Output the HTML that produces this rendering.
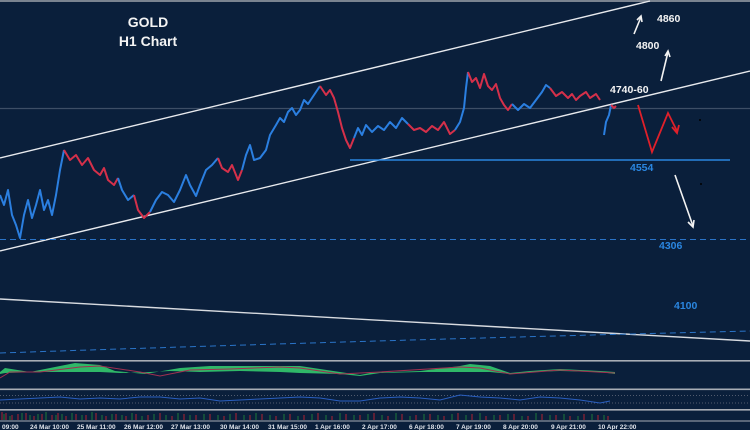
<!DOCTYPE html>
<html><head><meta charset="utf-8"><style>
html,body{margin:0;padding:0;background:#0a1f3b;}
svg{display:block}
text{font-family:"Liberation Sans",Arial,sans-serif;font-weight:bold}
</style></head><body>
<svg width="750" height="430" viewBox="0 0 750 430" xmlns="http://www.w3.org/2000/svg">
<rect width="750" height="430" fill="#0a1f3b"/>
<rect x="0" y="0" width="750" height="2" fill="#7a8390"/>
<line x1="0" y1="108.5" x2="750" y2="108.5" stroke="#3d4e66" stroke-width="1.2"/>
<line x1="0" y1="158" x2="650" y2="1" stroke="#e8eaee" stroke-width="1.4"/>
<line x1="0" y1="251" x2="750" y2="71" stroke="#e8eaee" stroke-width="1.4"/>
<line x1="0" y1="299" x2="750" y2="341" stroke="#d8dbe0" stroke-width="1.4"/>
<line x1="350" y1="160" x2="730" y2="160" stroke="#2a86e0" stroke-width="1.4"/>
<line x1="0" y1="239.5" x2="750" y2="239.5" stroke="#2a74c8" stroke-width="1" stroke-dasharray="6,4"/>
<path d="M0 353 Q 380 340 750 331" fill="none" stroke="#2a74c8" stroke-width="1" stroke-dasharray="6,4"/>
<g fill="none" stroke-width="2" stroke-linejoin="round">
<polyline stroke="#2b7fe0" points="0,195 4,205 8,190 12,215 16,225 20,238 24,215 28,200 32,218 36,205 40,190 44,210 48,200 52,215 56,195 60,170 64,150"/>
<polyline stroke="#d5304a" points="64,150 70,160 76,155 82,165 88,158 94,170 100,175 104,168 108,180 114,185 118,178"/>
<polyline stroke="#2b7fe0" points="118,178 122,190 128,200 134,195"/>
<polyline stroke="#d5304a" points="134,195 138,210 144,218 150,212"/>
<polyline stroke="#2b7fe0" points="150,212 156,200 162,192 168,195 174,202 180,190 186,175 190,185 196,196 200,185 206,170 212,165 218,158"/>
<polyline stroke="#d5304a" points="218,158 222,168 228,172 232,165 238,180 242,170"/>
<polyline stroke="#2b7fe0" points="242,170 246,155 250,145 254,160 260,158 266,150 270,135 276,125 280,118 284,122 288,112 292,108 296,115 300,110 304,100 308,104 312,98 316,92 320,86"/>
<polyline stroke="#d5304a" points="320,86 326,95 330,90 334,98 338,112 342,128 346,140 350,148 354,138"/>
<polyline stroke="#2b7fe0" points="354,138 358,128 362,135 366,125 372,132 378,126 384,130 390,122 396,128 402,118 408,124"/>
<polyline stroke="#d5304a" points="408,124 414,130 420,128 426,132 432,126 438,130 444,122 450,134 455,130"/>
<polyline stroke="#2b7fe0" points="455,130 460,122 464,108 466,88 468,72"/>
<polyline stroke="#d5304a" points="468,72 472,82 476,78 480,88 484,74 488,86 492,90 496,84 500,98 504,105 508,110 512,104"/>
<polyline stroke="#2b7fe0" points="512,104 518,110 524,104 530,108 536,100 542,92 546,85 550,88"/>
<polyline stroke="#d5304a" points="550,88 556,96 562,92 568,98 572,94 576,100 580,96 586,92 590,98 596,94 600,100"/>
<polyline stroke="#2b7fe0" points="604,135 606,122 609,115 611,105"/>
<polyline stroke="#d5304a" points="611,105 614,108 616,106"/>
</g>
<polyline points="638,105 652,152 668,113 677,131" fill="none" stroke="#e0202a" stroke-width="1.8"/>
<polyline points="672,127 677,133 679,125" fill="none" stroke="#e0202a" stroke-width="1.8"/>
<g stroke="#f2f2f2" stroke-width="1.6" fill="none">
<line x1="634" y1="34" x2="641" y2="17"/><polyline points="637,20 641,16 642,22"/>
<line x1="661" y1="81" x2="668" y2="52"/><polyline points="665,56 668,51 670,57"/>
<line x1="675" y1="175" x2="693" y2="226"/><polyline points="688,222 693,227 694,220"/>
</g>
<circle cx="700" cy="120" r="1" fill="#000"/><circle cx="701" cy="184" r="1" fill="#000"/>
<text x="148" y="27" fill="#f4f4f4" font-size="14" text-anchor="middle">GOLD</text>
<text x="148" y="46" fill="#f4f4f4" font-size="14" text-anchor="middle">H1 Chart</text>
<text x="657" y="22" fill="#f4f4f4" font-size="10.5">4860</text>
<text x="636" y="49" fill="#f4f4f4" font-size="10.5">4800</text>
<text x="610" y="93" fill="#f4f4f4" font-size="10.5">4740-60</text>
<text x="630" y="171" fill="#2a86e0" font-size="10.5">4554</text>
<text x="659" y="249" fill="#2a86e0" font-size="10.5">4306</text>
<text x="674" y="309" fill="#2a86e0" font-size="10.5">4100</text>
<rect x="0" y="360" width="750" height="1.6" fill="#a8adb5"/>
<path d="M0 372 L5 368 L30 372 L60 366 L75 363 L100 365 L115 371 L145 374 L180 368 L210 366 L240 366 L275 366 L290 366 L300 366 L340 372 L360 375 L370 373 L420 371 L460 366 L470 364 L490 366 L510 373 L530 371 L560 369 L600 371 L615 372 L615 374 L600 372 L560 371 L530 372 L510 374 L490 372 L470 372 L440 372 L420 372 L380 373 L360 376 L340 374 L300 373 L280 372 L240 371 L200 372 L170 371 L150 372 L120 373 L100 372 L70 372 L40 372 L5 373 L0 374 Z" fill="#2fb868"/>
<polyline points="0,378 10,372 40,372 80,367 100,366 140,372 160,376 190,370 230,369 280,367 300,368 340,374 380,372 460,367 480,368 510,374 560,370 615,373" fill="none" stroke="#a03050" stroke-width="1"/>
<rect x="0" y="388.5" width="750" height="1.6" fill="#a8adb5"/>
<line x1="0" y1="395.5" x2="750" y2="395.5" stroke="#6a7080" stroke-width="0.8" stroke-dasharray="1,2"/>
<line x1="0" y1="403" x2="750" y2="403" stroke="#6a7080" stroke-width="0.8" stroke-dasharray="1,2"/>
<polyline points="0,400 20,399 40,398 60,397 80,399 100,398 120,399 140,397 160,397 180,399 200,398 220,401 240,400 260,399 280,398 300,397 320,398 340,401 360,401 380,398 400,397 420,398 440,400 460,395 480,397 500,398 520,400 540,397 560,398 580,400 600,403 610,401" fill="none" stroke="#2a5fc0" stroke-width="1"/>
<rect x="0" y="409" width="750" height="1.6" fill="#a8adb5"/>
<g stroke-width="1">
<path d="M2 420V412M6 420V413M12 420V415M18 420V414M26 420V413M34 420V416M42 420V414M52 420V415M58 420V413M66 420V416M76 420V414M86 420V415M96 420V413M106 420V416M116 420V414M126 420V416M136 420V414M148 420V415M160 420V413M172 420V416M184 420V414M196 420V415M210 420V414M224 420V416M236 420V413M250 420V415M262 420V414M276 420V416M290 420V414M304 420V415M318 420V413M332 420V416M346 420V414M360 420V415M374 420V413M388 420V416M402 420V414M416 420V415M430 420V414M444 420V416M458 420V413M472 420V414M486 420V416M500 420V415M514 420V414M528 420V416M542 420V414M556 420V415M570 420V416M584 420V414M598 420V415M608 420V416" stroke="#b02030"/>
<path d="M4 420V414M10 420V416M22 420V413M30 420V415M38 420V414M46 420V412M56 420V415M62 420V414M72 420V413M82 420V415M92 420V412M102 420V415M112 420V414M122 420V415M132 420V413M142 420V416M154 420V414M166 420V415M178 420V413M190 420V415M204 420V414M218 420V415M230 420V414M244 420V415M256 420V413M270 420V415M284 420V414M298 420V416M312 420V414M326 420V415M340 420V413M354 420V415M368 420V414M382 420V415M396 420V413M410 420V416M424 420V414M438 420V415M452 420V414M466 420V415M480 420V413M494 420V415M508 420V414M522 420V416M536 420V413M550 420V415M564 420V414M578 420V416M592 420V414M604 420V415" stroke="#1f7a3a"/>
</g>
<rect x="0" y="420.5" width="750" height="1" fill="#a8adb5"/>
<g font-size="6.5" fill="#dfe3ea">
<text x="2" y="429" font-weight="normal">09:00</text>
<text x="30" y="429" font-weight="normal">24 Mar 10:00</text>
<text x="77" y="429" font-weight="normal">25 Mar 11:00</text>
<text x="124" y="429" font-weight="normal">26 Mar 12:00</text>
<text x="171" y="429" font-weight="normal">27 Mar 13:00</text>
<text x="220" y="429" font-weight="normal">30 Mar 14:00</text>
<text x="268" y="429" font-weight="normal">31 Mar 15:00</text>
<text x="315" y="429" font-weight="normal">1 Apr 16:00</text>
<text x="362" y="429" font-weight="normal">2 Apr 17:00</text>
<text x="409" y="429" font-weight="normal">6 Apr 18:00</text>
<text x="456" y="429" font-weight="normal">7 Apr 19:00</text>
<text x="503" y="429" font-weight="normal">8 Apr 20:00</text>
<text x="551" y="429" font-weight="normal">9 Apr 21:00</text>
<text x="598" y="429" font-weight="normal">10 Apr 22:00</text>
</g>
</svg>
</body></html>
